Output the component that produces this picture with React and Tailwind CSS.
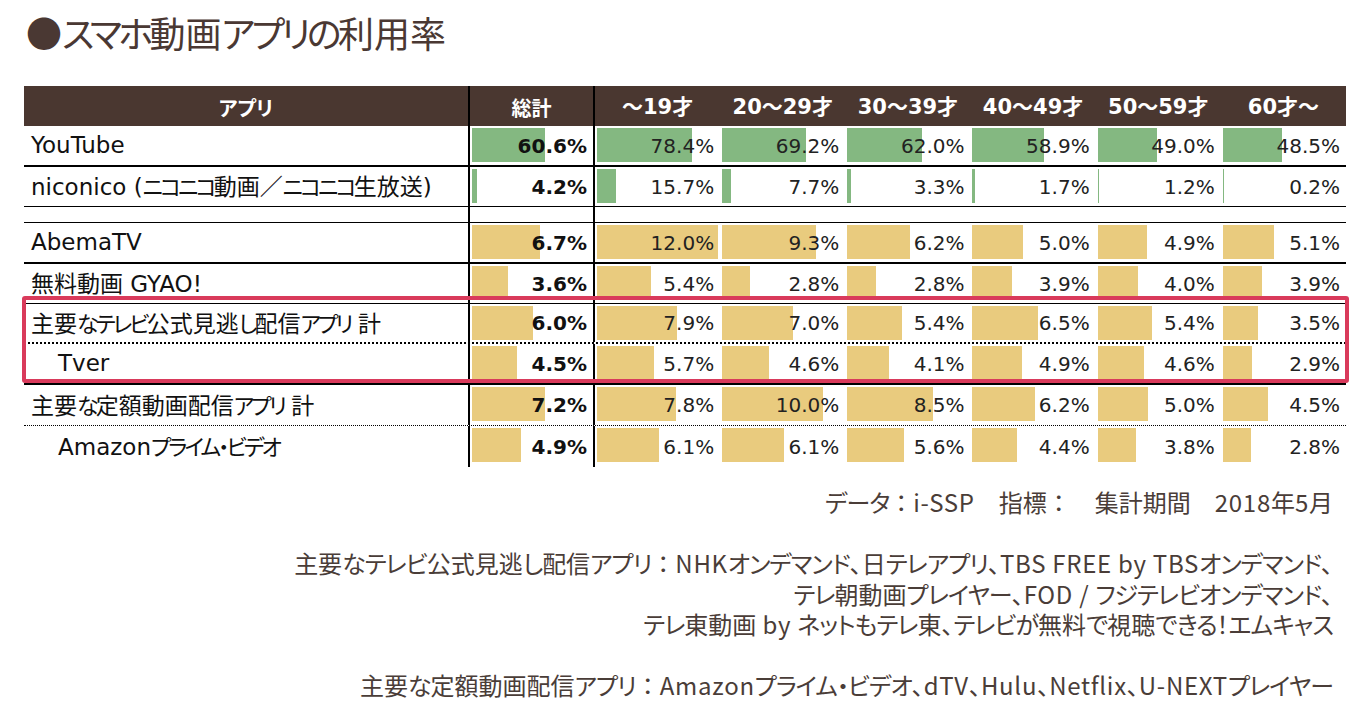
import React from "react";

const rows = [
  { name: "YouTube", c: "g", t: 60.6, a: [78.4, 69.2, 62.0, 58.9, 49.0, 48.5], h: "h-[41px]", b: "border-b-2 border-black" },
  { name: "niconico (ニコニコ動画／ニコニコ生放送)", c: "g", t: 4.2, a: [15.7, 7.7, 3.3, 1.7, 1.2, 0.2], h: "h-[40px]", b: "border-b border-black" },
  { spacer: true },
  { name: "AbemaTV", c: "y", t: 6.7, a: [12.0, 9.3, 6.2, 5.0, 4.9, 5.1], h: "h-[41px]", b: "border-b-2 border-black" },
  { name: "無料動画 GYAO!", c: "y", t: 3.6, a: [5.4, 2.8, 2.8, 3.9, 4.0, 3.9], h: "h-[40px]", b: "border-b border-black" },
  { name: "主要なテレビ公式見逃し配信アプリ 計", c: "y", t: 6.0, a: [7.9, 7.0, 5.4, 6.5, 5.4, 3.5], h: "h-[40px]", b: "border-b-2 border-dotted border-black" },
  { name: "Tver", indent: true, c: "y", t: 4.5, a: [5.7, 4.6, 4.1, 4.9, 4.6, 2.9], h: "h-[41px]", b: "border-b-2 border-black" },
  { name: "主要な定額動画配信アプリ 計", c: "y", t: 7.2, a: [7.8, 10.0, 8.5, 6.2, 5.0, 4.5], h: "h-[41px]", b: "border-b border-dotted border-black" },
  { name: "Amazonプライム・ビデオ", indent: true, c: "y", t: 4.9, a: [6.1, 6.1, 5.6, 4.4, 3.8, 2.8], h: "h-[41px]", b: "" },
];

const ages = ["～19才", "20～29才", "30～39才", "40～49才", "50～59才", "60才～"];

const footer = [
  "データ：i-SSP　指標：　集計期間　2018年5月",
  null,
  "主要なテレビ公式見逃し配信アプリ：NHKオンデマンド、日テレアプリ、TBS FREE by TBSオンデマンド、",
  "テレ朝動画プレイヤー、FOD / フジテレビオンデマンド、",
  "テレ東動画 by ネットもテレ東、テレビが無料で視聴できる！エムキャス",
  null,
  "主要な定額動画配信アプリ：Amazonプライム・ビデオ、dTV、Hulu、Netflix、U-NEXTプレイヤー",
];

function Runs({ text, latin, kana, cjk, colon }) {
  const parts = text.match(/[\x20-\x7e]+|[\u3040-\u30ff]+|：|[^\x20-\x7e\u3040-\u30ff：]+/g) || [];
  return parts.map((p, i) => {
    if (/^[\x20-\x7e]+$/.test(p)) return <span key={i} className={latin}>{p}</span>;
    if (/^[\u3040-\u30ff]+$/.test(p)) return <span key={i} className={kana}>{p}</span>;
    if (p === "：") return <span key={i} className={colon}>{p}</span>;
    return <span key={i} className={cjk}>{p}</span>;
  });
}

function barWidth(c, v) {
  return c === "g" ? (v / 100) * 121 : (v / 12) * 121;
}

function Cell({ c, v, bold, border }) {
  return (
    <div className={`relative flex items-center justify-end pr-[6px] ${border ? "border-r-2 border-black" : ""}`}>
      <div
        className={`absolute left-[2px] top-[2px] h-[34px] ${c === "g" ? "bg-[#84b881]" : "bg-[#e9cb7e]"}`}
        style={{ width: `${barWidth(c, v)}px` }}
      />
      <span
        className={`relative text-[20px] leading-none font-['DejaVu_Sans','Noto_Sans_CJK_JP',sans-serif] ${bold ? "font-bold text-[#111]" : "text-[#222]"}`}
      >
        {v.toFixed(1)}%
      </span>
    </div>
  );
}

export default function App() {
  return (
    <div className="w-[1350px] h-[714px] bg-white overflow-hidden font-['Noto_Sans_CJK_JP',sans-serif] [font-feature-settings:'palt']">
      <div className="pt-[10px] pl-[26px] text-[36px] leading-[44px] text-[#4a3833]">
        <Runs text="●スマホ動画アプリの利用率" latin="" kana="tracking-[-0.1em]" cjk="" colon="" />
      </div>
      <div className="relative mt-[32px] ml-[24px] w-[1322px]">
        <div className="grid grid-cols-[446px_125px_repeat(6,1fr)] h-[40px] bg-[#4a3730] text-white font-bold text-[20px]">
          <div className="flex items-center justify-center border-r-2 border-black pt-[3px]">アプリ</div>
          <div className="flex items-center justify-center border-r-2 border-black pt-[3px]">総計</div>
          {ages.map((a) => (
            <div key={a} className="flex items-center justify-center pt-[3px] text-[21px] font-['DejaVu_Sans','Noto_Sans_CJK_JP',sans-serif]">
              {a}
            </div>
          ))}
        </div>
        {rows.map((r, i) =>
          r.spacer ? (
            <div key={i} className="grid grid-cols-[446px_125px_repeat(6,1fr)] h-[16px] border-b border-black">
              <div className="border-r-2 border-black" />
              <div className="border-r-2 border-black" />
            </div>
          ) : (
            <div key={i} className={`grid grid-cols-[446px_125px_repeat(6,1fr)] ${r.h} ${r.b}`}>
              <div
                className={`flex items-center border-r-2 border-black text-[#111] leading-none whitespace-pre ${r.indent ? "pl-[34px]" : "pl-[7px]"}`}
              >
                <span>
                  <Runs
                    text={r.name}
                    latin="text-[23px] font-['DejaVu_Sans',sans-serif]"
                    kana="text-[22px] tracking-[-0.13em]"
                    cjk="text-[23px]"
                    colon="text-[23px]"
                  />
                </span>
              </div>
              <Cell c={r.c} v={r.t} bold border />
              {r.a.map((v, j) => (
                <Cell key={j} c={r.c} v={v} />
              ))}
            </div>
          )
        )}
        <div className="absolute left-[-2px] top-[210px] w-[1327px] h-[87px] border-4 border-[#d93a5b] rounded-[3px] pointer-events-none" />
      </div>
      <div className="mt-[20px] pr-[17px] text-right text-[24px] leading-[30.5px] text-[#4a3d38]">
        {footer.map((f, i) => (
          <div key={i} className="whitespace-pre h-[30.5px]">
            {f ? (
              <Runs
                text={f}
                latin="inline-block tracking-[0.03em]"
                kana="inline-block tracking-[-0.04em]"
                cjk="inline-block"
                colon="inline-block [font-feature-settings:normal]"
              />
            ) : (
              "\u00a0"
            )}
          </div>
        ))}
      </div>
    </div>
  );
}
